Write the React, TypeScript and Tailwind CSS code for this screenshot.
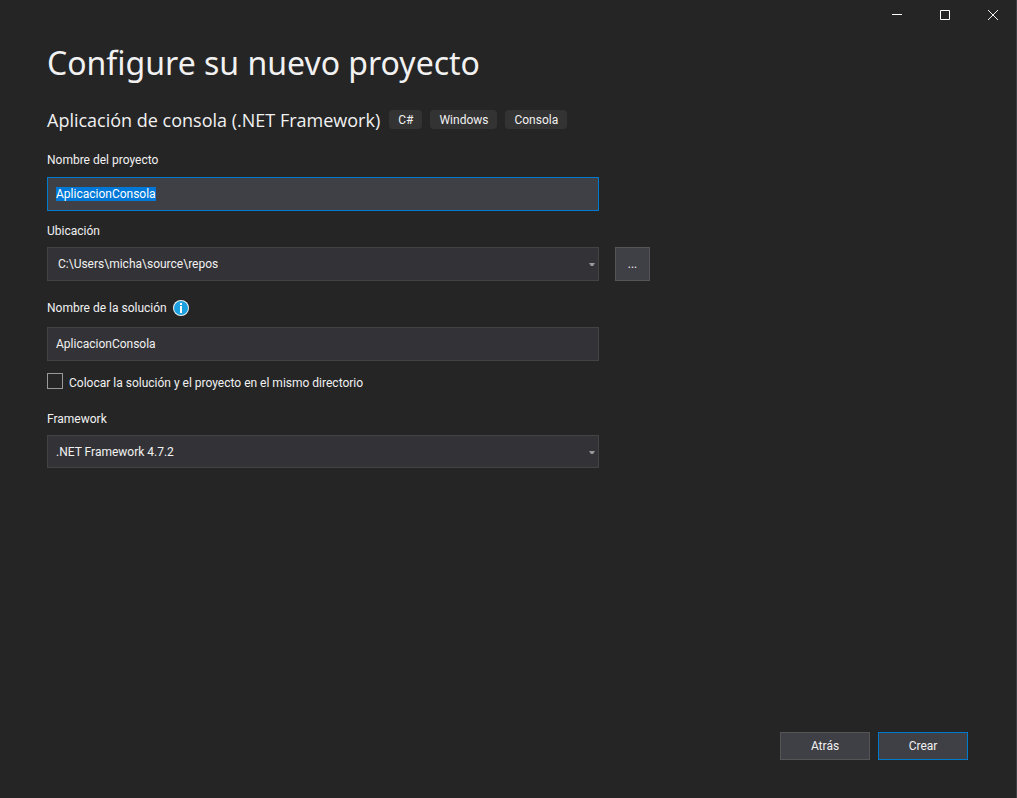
import { useEffect, useRef } from 'react';
import type { ReactNode } from 'react';

const fieldStyle =
  'block w-full appearance-none border border-[#434346] bg-[#333337] px-2 text-xs text-[#f1f1f1] outline-none';

function Label({ htmlFor, children }: { htmlFor: string; children: ReactNode }) {
  return (
    <label htmlFor={htmlFor} className="block text-xs leading-4">
      {children}
    </label>
  );
}

function Tag({ children }: { children: ReactNode }) {
  return <li className="rounded-sm bg-[#333333] px-[9px] pt-[2px] pb-px text-xs leading-4">{children}</li>;
}

function Dropdown({ id, value, className }: { id: string; value: string; className: string }) {
  return (
    <div className="relative">
      <select id={id} defaultValue={value} className={`${fieldStyle} ${className}`}>
        <option>{value}</option>
      </select>
      <svg
        className="pointer-events-none absolute top-4 right-1 h-[3px] w-[6px]"
        viewBox="0 0 6 3"
        fill="#999999"
        aria-hidden="true"
      >
        <path d="M0 0h6L4 3H2z" />
      </svg>
    </div>
  );
}

function WindowControls() {
  return (
    <div className="-mr-px flex h-[30px] justify-end">
      <button type="button" aria-label="Minimizar" className="flex w-12 items-center justify-center">
        <svg width="10" height="10" viewBox="0 0 10 10" shapeRendering="crispEdges" aria-hidden="true">
          <path d="M0 4h10v1H0z" fill="#ffffff" />
        </svg>
      </button>
      <button type="button" aria-label="Maximizar" className="flex w-12 items-center justify-center">
        <svg width="10" height="10" viewBox="0 0 10 10" aria-hidden="true">
          <path d="M.5.5h9v9h-9z" fill="none" stroke="#ffffff" />
        </svg>
      </button>
      <button type="button" aria-label="Cerrar" className="flex w-12 items-center justify-center">
        <svg width="10" height="10" viewBox="0 0 10 10" aria-hidden="true">
          <path d="M0 0l10 10M10 0L0 10" fill="none" stroke="#f1f1f1" />
        </svg>
      </button>
    </div>
  );
}

export default function App() {
  const nameRef = useRef<HTMLInputElement>(null);

  useEffect(() => {
    nameRef.current?.focus();
    nameRef.current?.select();
  }, []);

  return (
    <div className="flex min-h-screen flex-col border-r border-[#3f3f46] bg-[#252526] font-[Roboto,sans-serif] text-[#f1f1f1]">
      <WindowControls />
      <main className="flex-1 px-[47px] pt-[9px]">
        <h1 className="font-['Noto_Sans',sans-serif] text-[32px] leading-[48px]">Configure su nuevo proyecto</h1>
        <div className="mt-[18px] flex items-start gap-[9px]">
          <h2 className="font-['Open_Sans',sans-serif] text-lg leading-[30px]">
            Aplicación de consola (.NET Framework)
          </h2>
          <ul className="flex gap-2 pt-[5px]">
            <Tag>C#</Tag>
            <Tag>Windows</Tag>
            <Tag>Consola</Tag>
          </ul>
        </div>

        <form className="mt-[17px] max-w-[552px]">
          <Label htmlFor="project-name">Nombre del proyecto</Label>
          <input
            ref={nameRef}
            id="project-name"
            type="text"
            defaultValue="AplicacionConsola"
            className="mt-[9px] block h-[34px] w-full border border-[#007acc] bg-[#3f3f46] px-2 text-xs text-[#f1f1f1] outline-none selection:bg-[#0078d7] selection:text-white"
          />

          <div className="mt-3">
            <Label htmlFor="location">Ubicación</Label>
            <div className="-mr-[51px] mt-2 flex gap-4">
              <div className="flex-1">
                <Dropdown id="location" value="C:\Users\micha\source\repos" className="h-[34px] pl-[10px]" />
              </div>
              <button
                type="button"
                aria-label="Examinar"
                className="h-[34px] w-[35px] border border-[#555555] bg-[#3f3f46] text-xs"
              >
                ...
              </button>
            </div>
          </div>

          <div className="mt-[19px] flex items-center gap-[6px]">
            <Label htmlFor="solution-name">Nombre de la solución</Label>
            <svg width="16" height="16" viewBox="0 0 16 16" aria-hidden="true">
              <circle cx="8" cy="8" r="8" fill="#f1f1f1" />
              <circle cx="8" cy="8" r="7" fill="#1ba1e2" />
              <path d="M7 3h2v2H7zM7 6h2v7H7z" fill="#ffffff" />
            </svg>
          </div>
          <input
            id="solution-name"
            type="text"
            defaultValue="AplicacionConsola"
            className={`${fieldStyle} mt-[11px] h-[34px]`}
          />

          <div className="mt-3 flex gap-[6px]">
            <input
              id="same-directory"
              type="checkbox"
              className="size-4 appearance-none border border-[#999999] bg-[#252526] checked:bg-[#007acc]"
            />
            <label htmlFor="same-directory" className="pt-[2px] text-xs leading-4">
              Colocar la solución y el proyecto en el mismo directorio
            </label>
          </div>

          <div className="mt-5">
            <Label htmlFor="framework">Framework</Label>
            <div className="mt-2">
              <Dropdown id="framework" value=".NET Framework 4.7.2" className="h-[33px]" />
            </div>
          </div>
        </form>
      </main>
      <footer className="flex justify-end gap-2 pr-12 pb-[38px]">
        <button type="button" className="h-7 w-[90px] border border-[#555555] bg-[#3f3f46] text-xs">
          Atrás
        </button>
        <button type="button" className="h-7 w-[90px] border border-[#007acc] bg-[#3f3f46] text-xs">
          Crear
        </button>
      </footer>
    </div>
  );
}
